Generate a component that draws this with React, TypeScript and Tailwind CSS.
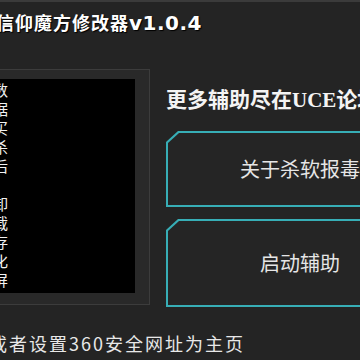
import React from "react";

const sideChars = ["数", "据", "买", "杀", "后", "\u00a0", "卸", "载", "存", "化", "屏"];

const ChamferButton = ({ label, h }: { label: string; h: string }) => (
  <div
    className={`w-[268px] ${h} bg-[#37aeb6] p-[2px] [clip-path:polygon(12px_0,100%_0,100%_100%,0_100%,0_11px)]`}
  >
    <div className="w-full h-full bg-[#252525] flex items-center justify-center [clip-path:polygon(11px_0,100%_0,100%_100%,0_100%,0_10px)]">
      <span className="text-[20px] leading-[24px] text-[#e6e6e6]">{label}</span>
    </div>
  </div>
);

export default function App() {
  return (
    <div className="w-[360px] h-[360px] overflow-hidden bg-[#242424] font-['Noto_Sans_CJK_SC',sans-serif]">
      <div className="h-[2px] bg-[#3b3b3b]" />
      {/* title */}
      <div className="h-[67px] pt-[8px]">
        <div className="ml-[-4px] whitespace-nowrap text-[18px] leading-[24px] font-bold text-white tracking-[1px] [text-shadow:1px_1px_1px_#000]">
          信仰魔方修改器<span className="font-['DejaVu_Sans',sans-serif] text-[20px] tracking-[0.5px]">v1.0.4</span>
        </div>
      </div>

      <div className="flex items-start">
        {/* left panel */}
        <div className="w-[150px] shrink-0 h-[236px] bg-[#292929] border-t border-r border-b border-[#3c3c3c] pt-[9px] pr-[14px]">
          <div className="h-[214px] bg-black overflow-hidden">
            <div className="ml-[-7px] pt-[1px] flex flex-col text-[15px] leading-[19px] text-[#f2f2f2]">
              {sideChars.map((c, i) => (
                <span key={i}>{c}</span>
              ))}
            </div>
          </div>
        </div>

        {/* right column */}
        <div className="ml-[16px] shrink-0 flex flex-col">
          <div className="mt-[17px] h-[28px] whitespace-nowrap text-[21px] leading-[28px] font-bold text-[#f4f4f4] font-['Liberation_Serif','Noto_Sans_CJK_SC',serif]">
            更多辅助尽在UCE论坛
          </div>
          <div className="mt-[17px]">
            <ChamferButton label="关于杀软报毒" h="h-[76px]" />
          </div>
          <div className="mt-[12px]">
            <ChamferButton label="启动辅助" h="h-[88px]" />
          </div>
        </div>
      </div>

      {/* footer */}
      <div className="mt-[24px] ml-[-11px] whitespace-nowrap text-[18px] leading-[24px] text-[#e8e8e8] tracking-[2px]">
        或者设置360安全网址为主页
      </div>
    </div>
  );
}
